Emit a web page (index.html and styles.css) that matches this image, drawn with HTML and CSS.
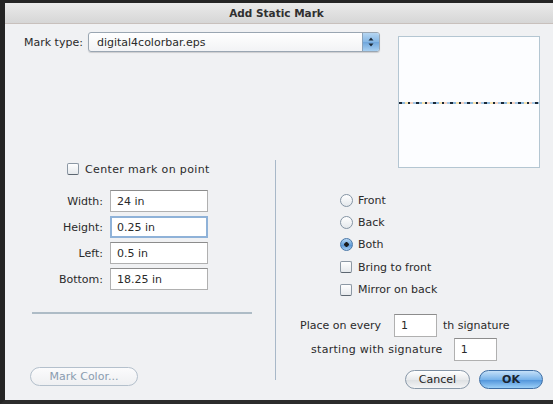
FILE: index.html
```html
<!DOCTYPE html>
<html lang="en">
<head>
<meta charset="utf-8">
<title>Add Static Mark</title>
<link rel="stylesheet" href="styles.css">
</head>
<body>
<div class="window">
  <div class="titlebar">Add Static Mark</div>
  <div class="content">
    <div class="head">
      <div class="type-row">
        <span class="label">Mark type:</span>
        <div class="popup">
          <span class="popup-text">digital4colorbar.eps</span>
          <span class="popup-arrows">
            <svg width="6" height="10" viewBox="0 0 6 10"><path d="M3 0.5 L5.5 3.5 H0.5 Z M3 9.5 L5.5 6.5 H0.5 Z" fill="#1c2a3a"/></svg>
          </span>
        </div>
      </div>
      <div class="preview"><div class="preview-bar"></div></div>
    </div>
    <div class="main">
      <div class="left">
        <label class="check center-check"><span class="box"></span>Center mark on point</label>
        <div class="fields">
          <span class="flabel">Width:</span><span class="field">24 in</span>
          <span class="flabel">Height:</span><span class="field focus">0.25 in</span>
          <span class="flabel">Left:</span><span class="field">0.5 in</span>
          <span class="flabel">Bottom:</span><span class="field">18.25 in</span>
        </div>
        <div class="hline"></div>
        <button class="btn disabled">Mark Color...</button>
      </div>
      <div class="vsep"></div>
      <div class="right">
        <div class="options">
          <label class="opt"><span class="radio"></span>Front</label>
          <label class="opt"><span class="radio"></span>Back</label>
          <label class="opt"><span class="radio on"></span>Both</label>
          <label class="opt"><span class="box"></span>Bring to front</label>
          <label class="opt"><span class="box"></span>Mirror on back</label>
        </div>
        <div class="every-row">
          <span>Place on every</span><span class="field small">1</span><span>th signature</span>
        </div>
        <div class="start-row">
          <span>starting with signature</span><span class="field small">1</span>
        </div>
        <div class="buttons">
          <button class="btn cancel">Cancel</button>
          <button class="btn ok">OK</button>
        </div>
      </div>
    </div>
  </div>
</div>
</body>
</html>
```
FILE: styles.css
```css
* { box-sizing: border-box; }

html, body {
  margin: 0;
  padding: 0;
  background: #222;
}

body {
  width: 553px;
  height: 404px;
  overflow: hidden;
  font-family: "DejaVu Sans", "Liberation Sans", sans-serif;
  font-size: 11px;
  color: #2a2a2a;
}

.window {
  width: 553px;
  height: 404px;
  border-left: 5px solid #242424;
  border-top: 3px solid #242424;
  border-bottom: 4px solid #2c2c2c;
  background: #f0f1f3;
  display: flex;
  flex-direction: column;
}

.titlebar {
  height: 21px;
  line-height: 20px;
  text-align: center;
  font-weight: bold;
  font-size: 10.5px;
  color: #303030;
  background: linear-gradient(#eaeaea, #d6d6d6);
  border-bottom: 1px solid #c8c0bc;
  padding-right: 5px;
}

.content {
  flex: 1;
  display: flex;
  flex-direction: column;
}

/* top strip: mark type popup and preview */
.head {
  display: flex;
  align-items: flex-start;
  height: 136px;
}

.type-row {
  display: flex;
  align-items: center;
  padding: 8px 0 0 19px;
}

.label { margin-right: 5px; }

.popup {
  width: 292px;
  height: 20px;
  border: 1px solid #9aa6b2;
  border-radius: 3px;
  background: linear-gradient(#ffffff, #f2f3f5);
  box-shadow: 0 1px 1px rgba(0,0,0,0.15);
  display: flex;
  align-items: center;
  justify-content: space-between;
  padding-left: 8px;
  overflow: hidden;
}

.popup-arrows {
  width: 17px;
  height: 18px;
  background: linear-gradient(#b6d6f2, #84b6e4 50%, #6fa6dc 51%, #a8d0f2);
  border-left: 1px solid #8aa2ba;
  display: flex;
  align-items: center;
  justify-content: center;
}

.preview {
  margin: 12px 13px -8px auto;
  width: 142px;
  height: 132px;
  border: 1px solid #b4c6d2;
  background: #fcfdff;
  display: flex;
  align-items: center;
}

.preview-bar {
  width: 100%;
  height: 2px;
  margin-top: 1px;
  background: repeating-linear-gradient(90deg,
    #1a2a3a 0 3px, #8cb8dc 3px 6px, #f8e4b0 6px 9px,
    #1a2a3a 9px 11px, #f6d4c4 11px 14px, #a4c6e4 14px 17px);
}

/* lower section: two panels with a divider */
.main {
  flex: 1;
  display: grid;
  grid-template-columns: 270px 1px 1fr;
}

.left {
  display: flex;
  flex-direction: column;
}

.check, .opt {
  display: flex;
  align-items: center;
  height: 12px;
}

.center-check {
  margin: 3px 0 0 62px;
  letter-spacing: 0.35px;
}

.box {
  width: 12px;
  height: 12px;
  border: 1px solid #8c98a4;
  border-bottom-color: #5c6670;
  border-radius: 2px;
  background: linear-gradient(#ffffff, #e6e9ec);
  margin-right: 6px;
  flex: none;
}

.fields {
  display: grid;
  grid-template-columns: 98px 98px;
  grid-auto-rows: 22px;
  column-gap: 7px;
  row-gap: 4px;
  margin-top: 15px;
  align-items: center;
}

.flabel { text-align: right; }

.field {
  height: 22px;
  border: 1px solid #b0b0b0;
  border-top-color: #8c8c8c;
  background: #fff;
  padding: 0 6px;
  display: flex;
  align-items: center;
}

.field.focus {
  border: 2px solid #8fb2d8;
  padding-left: 5px;
}

.hline {
  margin: 22px 0 0 27px;
  width: 220px;
  height: 2px;
  background: #aebcc6;
}

.btn {
  font-family: inherit;
  font-size: 11px;
  height: 19px;
  border-radius: 10px;
  border: 1px solid #8898a8;
  background: linear-gradient(#ffffff, #e8eaec 50%, #dcdfe2 51%, #f4f5f6);
  color: #222;
  padding: 0;
}

.btn.disabled {
  margin: 53px 0 0 25px;
  width: 108px;
  border-color: #b4c0cc;
  color: #8a9cb0;
  background: linear-gradient(#fbfbfc, #eff0f2);
}

.vsep {
  height: 220px;
  background: #a8b8c8;
}

.right {
  display: flex;
  flex-direction: column;
}

.options {
  display: flex;
  flex-direction: column;
  gap: 10px;
  padding: 34px 0 0 64px;
}

.opt { height: 12.4px; }

.radio {
  width: 13px;
  height: 13px;
  border-radius: 50%;
  border: 1px solid #8494a4;
  background: linear-gradient(#ffffff, #e4e8ec);
  margin-right: 5px;
  flex: none;
}

.radio.on {
  border-color: #4a78a8;
  background: radial-gradient(circle, #1a1a1a 0 2px, transparent 2.5px),
    linear-gradient(#b8d8f4, #6aa4dc 50%, #4f8ed0 51%, #a8d0f4);
}

.every-row, .start-row {
  display: flex;
  align-items: center;
  white-space: nowrap;
}

.every-row {
  margin-top: 18px;
  padding-left: 24px;
}

.every-row .field { margin: 0 6px 0 13px; }

.start-row {
  margin-top: 1px;
  padding-left: 35px;
  letter-spacing: 0.3px;
}

.start-row .field { margin-left: 11px; }

.field.small {
  width: 43px;
  height: 23px;
}

.buttons {
  display: flex;
  justify-content: flex-end;
  gap: 9px;
  padding-right: 10px;
  margin-top: 9px;
}

.btn.cancel { width: 65px; }

.btn.ok {
  width: 64px;
  font-weight: bold;
  border-color: #3e6ea4;
  background: linear-gradient(#c4e0f8, #7ab4ea 50%, #4e92da 51%, #9cd0f8);
  color: #1a2430;
}
```
